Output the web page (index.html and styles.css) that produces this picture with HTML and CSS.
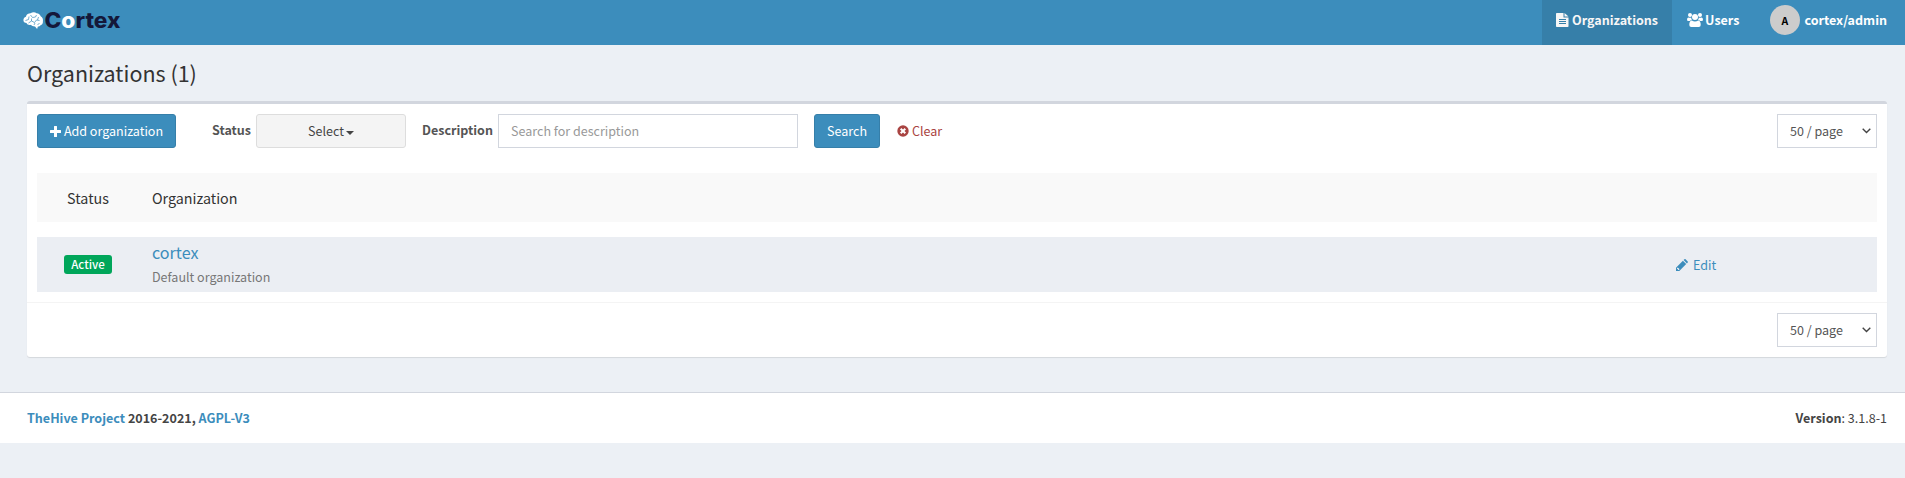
FILE: index.html
```html
<!DOCTYPE html>
<html lang="en">
<head>
<meta charset="utf-8">
<title>Cortex</title>
<link rel="stylesheet" href="styles.css">
</head>
<body>
<header class="navbar">
  <a class="logo">
    <svg width="106" height="30" viewBox="0 0 106 30">
      <g transform="translate(4.500 8)">
        <path fill="#fff" d="M0 9C-.4 6.500 1 5.200 2.400 4.800 3 2.200 5 1.300 7 1.300 9 0 11.500 0 13 1.200c2.300 0 3.800 1.500 4.200 3.100 2 1.200 2.600 3.200 2.200 5.200.2 2-.8 3.300-2.400 3.700-.6 1-1.600 1.300-2.600 1.400L13.600 17 11.500 14.500C9.500 14.500 8 14 7.500 12.800 5.500 13.500 3.500 12.500 3 11 1.500 11 .3 10.300 0 9Z"/>
        <path fill="none" stroke="#3c8dbc" stroke-width=".7" d="M2 8.500l3-1 .5-3M7 3l2 2.500 3-.5 1-2M5 11l3-2 3 1.500 2-2.500 3 .5M15 5l-1 3M8 6.500v2.500M14 13l2-2M10.500 13l1-2"/>
      </g>
      <g class="wordmark" fill="#14183a">
        <text y="24.300" x="25.500" textLength="76" lengthAdjust="spacingAndGlyphs">C<tspan fill="#fff">o</tspan>rtex</text>
      </g>
    </svg>
  </a>
  <nav class="menu">
    <a class="menu-item active"><svg width="13" height="14" viewBox="0 0 13 14"><path fill="currentColor" fill-rule="evenodd" d="M0 .8Q0 0 .8 0H7.500V4.500H12.500V13.200Q12.500 14 11.700 14H.8Q0 14 0 13.200ZM8.500 0 12.500 3.500H8.500ZM3 6V7H10V6ZM3 8V9H10V8ZM3 10V11H10V10Z"/></svg><span>Organizations</span></a>
    <a class="menu-item users"><svg width="16" height="14" viewBox="0 0 16 14"><g fill="currentColor"><circle cx="3" cy="2" r="2"/><circle cx="13" cy="2" r="2"/><circle cx="8" cy="4" r="3"/><path d="M0 7Q0 4.400 1.200 4.400 3 5.200 4.200 4.600 4.200 6.200 5 7 3.500 7 2.700 8H1.500Q0 8 0 7ZM16 7Q16 4.400 14.800 4.400 13 5.200 11.800 4.600 11.800 6.200 11 7 12.500 7 13.300 8H14.500Q16 8 16 7ZM2.300 12Q2.300 7.500 4.800 7.500 8 9.600 11.200 7.500 13.700 7.500 13.700 12 13.700 14 11.700 14H4.300Q2.300 14 2.300 12Z"/></g></svg><span>Users</span></a>
    <a class="menu-item user"><span class="avatar">A</span><span>cortex/admin</span></a>
  </nav>
</header>
<main class="content">
  <h1 class="title">Organizations (1)</h1>
  <section class="box">
    <div class="toolbar">
      <button class="btn primary add"><svg width="11" height="11" viewBox="0 0 11 11"><path fill="currentColor" d="M4 .5Q4 0 4.500 0H6.500Q7 0 7 .5V4H10.500Q11 4 11 4.500V6.500Q11 7 10.500 7H7V10.500Q7 11 6.500 11H4.500Q4 11 4 10.500V7H.5Q0 7 0 6.500V4.500Q0 4 .5 4H4Z"/></svg><span>Add organization</span></button>
      <label class="label l-status">Status</label>
      <button class="btn select">Select<span class="caret"></span></button>
      <label class="label l-desc">Description</label>
      <input class="input" type="text" placeholder="Search for description">
      <button class="btn primary search">Search</button>
      <a class="clear"><svg width="12" height="12" viewBox="0 0 12 12"><circle cx="6" cy="6" r="5.700" fill="currentColor"/><path stroke="#fff" stroke-width="2" d="M3.700 3.700l4.600 4.600M8.300 3.700 3.700 8.300"/></svg><span>Clear</span></a>
      <div class="pager"><span>50 / page</span><svg width="9" height="6" viewBox="0 0 9 6"><path fill="none" stroke="#444" stroke-width="1.400" d="M.7.700 4.500 4.500 8.300.7"/></svg></div>
    </div>
    <div class="row head"><div class="c-status">Status</div><div class="c-org">Organization</div></div>
    <div class="row item">
      <div class="c-status"><span class="badge">Active</span></div>
      <div class="c-org"><a class="name">cortex</a><div class="desc">Default organization</div></div>
      <a class="edit"><svg width="12" height="12" viewBox="0 0 12 12"><path fill="currentColor" fill-rule="evenodd" d="M0 12V8.700L6.900 1.800 10.200 5.100 3.300 12ZM1 9.200V10.100H1.900V11H2.800L3.600 10.200 1.800 8.400ZM7.600 1.100 8.400.3Q9 -.2 9.600.3L11.700 2.400Q12.200 3 11.700 3.600L10.900 4.400Z"/></svg><span>Edit</span></a>
    </div>
    <div class="box-footer">
      <div class="pager"><span>50 / page</span><svg width="9" height="6" viewBox="0 0 9 6"><path fill="none" stroke="#444" stroke-width="1.400" d="M.7.700 4.500 4.500 8.300.7"/></svg></div>
    </div>
  </section>
</main>
<footer class="footer">
  <strong><a>TheHive Project</a> 2016-2021, <a>AGPL-V3</a></strong>
  <div><strong>Version</strong>: 3.1.8-1</div>
</footer>
</body>
</html>
```
FILE: styles.css
```css
* { box-sizing: border-box; }
body {
  margin: 0;
  min-height: 478px;
  background: #ecf0f5;
  color: #444;
  font: 12.540px/20px "Noto Sans CJK SC", "Noto Sans", sans-serif;
}
svg { display: block; flex: none; }
.navbar { display: flex; justify-content: space-between; height: 45px; background: #3c8dbc; color: #fff; }
.logo { padding: 4px 0 0 19px; }
.wordmark { font: 800 21px Inter, sans-serif; }
.menu { display: flex; padding-right: 3px; font-weight: 700; }
.menu-item { display: flex; align-items: center; gap: 2px; padding: 0 15px 5px 14px; height: 45px; }
.menu-item.active { width: 130px; gap: 3px; background: #367fa9; color: #f6f6f6; }
.menu-item.users { padding-left: 15px; padding-right: 16px; }
.menu-item.user { gap: 4px; padding-left: 15px; }
.avatar { width: 30px; height: 30px; padding-right: 1px; border-radius: 50%; background: #ccc; color: #000; font-size: 10.500px; line-height: 31px; text-align: center; }
.content { padding: 0 18px 0 27px; height: 347px; }
.title { margin: 0; padding-top: 13px; height: 56px; color: #333; font-size: 21.500px; font-weight: 400; line-height: 30px; }
.box { height: 256px; border-top: 3px solid #d2d6de; border-radius: 3px; background: #fff; box-shadow: 0 1px 1px rgba(0, 0, 0, .1); }
.toolbar { display: flex; align-items: center; height: 69px; padding: 10px 10px 25px; }
.btn { display: flex; align-items: center; justify-content: center; height: 34px; padding: 0; border: 1px solid #ddd; border-radius: 3px; background: #f4f4f4; color: #444; font: inherit; }
.primary { border-color: #367fa9; background: #3c8dbc; color: #fff; }
.add { width: 139px; gap: 3px; }
.label { font-weight: 700; color: #555; }
.l-status { width: 80px; padding: 0 0 2px 36px; }
.select { width: 150px; }
.caret { margin: 3px 0 0 2px; border: 4px solid transparent; border-top-color: #444; border-bottom: 0; }
.l-desc { width: 92px; padding: 0 0 2px 16px; }
.input { width: 300px; height: 34px; padding: 0 12px 2px; border: 1px solid #d2d6de; font: inherit; }
.input::placeholder { color: #999; }
.search { width: 66px; margin-left: 16px; }
.clear { display: flex; align-items: center; gap: 3px; margin-left: 17px; color: #a94442; }
.pager { display: flex; align-items: center; justify-content: space-between; width: 100px; height: 34px; margin-left: auto; padding: 0 5px 0 12px; border: 1px solid #d2d6de; background: #fff; color: #555; }
.row { display: flex; align-items: center; margin: 0 10px; color: #333; }
.head { height: 49px; background: #f9f9f9; font-size: 14.300px; }
.item { height: 55px; margin-top: 15px; background: #ebeef3; }
.c-status { width: 102px; text-align: center; }
.c-org { flex: 1; padding-left: 13px; }
.badge { display: block; width: 48px; height: 19px; margin: 0 auto; border-radius: 3px; background: #00a65a; color: #fff; font-size: 11.500px; font-weight: 500; line-height: 18px; }
.name { display: block; color: #3c8dbc; font-size: 16.100px; line-height: 20px; }
.desc { padding-top: 4px; color: #777; line-height: 22px; }
.edit { display: flex; align-items: center; gap: 5px; width: 201px; color: #3c8dbc; }
.box-footer { display: flex; height: 55px; margin-top: 10px; padding: 10px; border-top: 1px solid #f4f4f4; }
.footer { display: flex; justify-content: space-between; height: 51px; padding: 15px 18px 0 27px; border-top: 1px solid #d2d6de; background: #fff; }
.footer a { color: #3c8dbc; }
```
